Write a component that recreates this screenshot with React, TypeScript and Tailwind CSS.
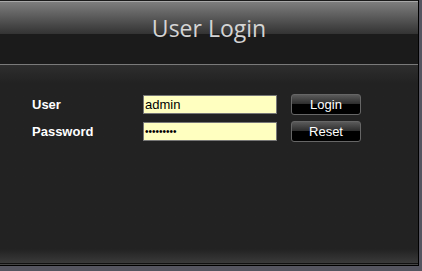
export default function App() {
  return (
    <div className="h-[271px] w-[422px] bg-[#555560]">
      <div className="flex h-[266px] w-[419px] flex-col border-r border-b border-black bg-[#222222]">
        <div className="relative h-[64px] shrink-0 border-t border-[#1a1a1a]">
          <div className="h-px bg-[#a8a8a8]" />
          <div className="h-[32px] bg-gradient-to-b from-[#7e7e7e] via-[#585858] to-[#333333]" />
          <div className="h-[30px] bg-[#1b1b1b]" />
          <h1 className="absolute inset-x-0 top-[13px] text-center font-['Open_Sans',sans-serif] text-[23px] leading-[28px] text-[#d4d4d4]">
            User Login
          </h1>
        </div>
        <div className="h-px bg-[#7a7a7a]" />
        <div className="flex-1 bg-gradient-to-b from-[#2e2e2e] via-[#222222] via-[10%] to-[#222222]">
          <div className="grid grid-cols-[111px_148px_70px] items-center gap-y-[6px] pt-[29px] pl-[32px] font-['Liberation_Sans',Arial,sans-serif]">
            <span className="text-[13px] font-bold text-white">User</span>
            <input
              readOnly
              value="admin"
              className="h-[19px] w-[134px] border border-[#777] bg-[#ffffc0] px-px text-[13px] text-black outline-none"
            />
            <button className="h-[21px] w-[70px] rounded-[3px] border border-[#666] bg-[linear-gradient(#5a5a5a,#2a2a2a_50%,#000_50%,#000)] text-[13px] text-white">
              Login
            </button>
            <span className="text-[13px] font-bold text-white">Password</span>
            <input
              readOnly
              type="password"
              value="admin1234"
              className="h-[19px] w-[134px] border border-[#777] bg-[#ffffc0] px-px text-[10px] text-black outline-none"
            />
            <button className="h-[21px] w-[70px] rounded-[3px] border border-[#666] bg-[linear-gradient(#5a5a5a,#2a2a2a_50%,#000_50%,#000)] text-[13px] text-white">
              Reset
            </button>
          </div>
        </div>
        <div className="h-[14px] bg-gradient-to-b from-[#222222] to-[#3a3a3a]" />
        <div className="h-px bg-[#111]" />
        <div className="h-px bg-[#444]" />
      </div>
    </div>
  );
}
